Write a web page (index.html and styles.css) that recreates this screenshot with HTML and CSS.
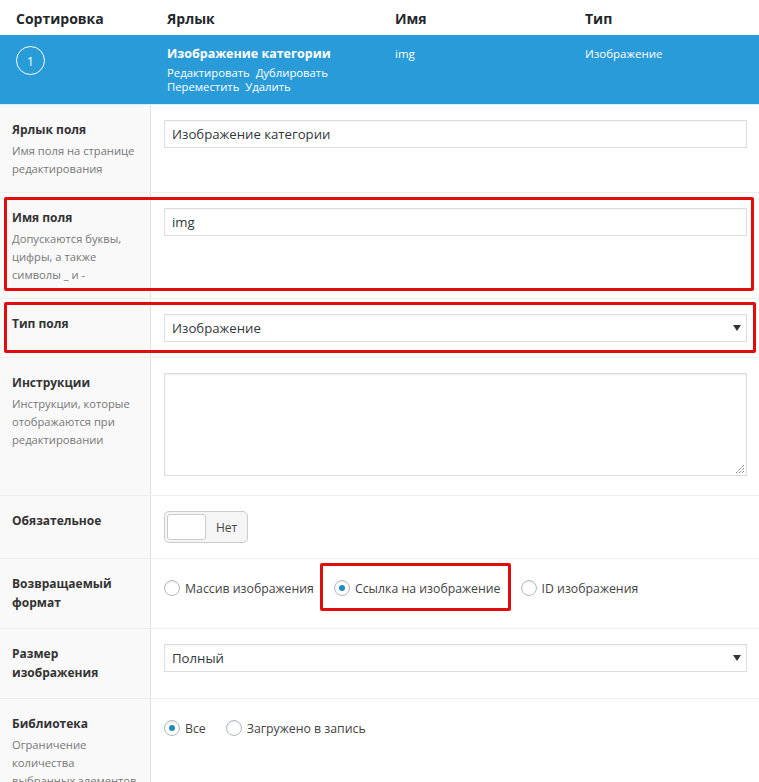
FILE: index.html
```html
<!DOCTYPE html>
<html lang="ru">
<head>
<meta charset="utf-8">
<link rel="stylesheet" href="styles.css">
</head>
<body>
<div class="page">
  <div class="thead">
    <div class="th th-order">Сортировка</div>
    <div class="th">Ярлык</div>
    <div class="th">Имя</div>
    <div class="th">Тип</div>
  </div>
  <div class="fieldrow">
    <div class="order"><span class="num">1</span></div>
    <div class="fcell">
      <div class="ftitle">Изображение категории</div>
      <div class="flinks">
        <div><span>Редактировать</span> <span>Дублировать</span></div>
        <div><span>Переместить</span> <span>Удалить</span></div>
      </div>
    </div>
    <div class="fcell ftext">img</div>
    <div class="fcell ftext">Изображение</div>
  </div>

  <div class="settings">
    <div class="row row-label">
      <div class="lbl"><b>Ярлык поля</b><p>Имя поля на странице редактирования</p></div>
      <div class="inp"><div class="input">Изображение категории</div></div>
    </div>
    <div class="row row-name">
      <div class="lbl"><b>Имя поля</b><p>Допускаются буквы, цифры, а также символы _ и -</p></div>
      <div class="inp"><div class="input">img</div></div>
      <div class="mark mark-name"></div>
    </div>
    <div class="row row-type">
      <div class="lbl"><b>Тип поля</b></div>
      <div class="inp"><div class="input select">Изображение<span class="arrow"></span></div></div>
      <div class="mark mark-type"></div>
    </div>
    <div class="row row-instr">
      <div class="lbl"><b>Инструкции</b><p>Инструкции, которые отображаются при редактировании</p></div>
      <div class="inp"><div class="textarea">
        <svg class="grip" width="10" height="10" viewBox="0 0 10 10"><path d="M9 1 L1 9 M9 4 L4 9 M9 7 L7 9" stroke="#555" stroke-width="1" stroke-dasharray="1 1" fill="none"/></svg>
      </div></div>
    </div>
    <div class="row row-req">
      <div class="lbl"><b>Обязательное</b></div>
      <div class="inp"><div class="toggle"><span class="knob"></span><span class="tlabel">Нет</span></div></div>
    </div>
    <div class="row row-ret">
      <div class="lbl"><b>Возвращаемый формат</b></div>
      <div class="inp radios">
        <label class="radio"><span class="dot"></span>Массив изображения</label>
        <label class="radio on"><span class="dot"></span>Ссылка на изображение</label>
        <label class="radio"><span class="dot"></span>ID изображения</label>
      </div>
      <div class="mark mark-url"></div>
    </div>
    <div class="row row-size">
      <div class="lbl"><b>Размер изображения</b></div>
      <div class="inp"><div class="input select">Полный<span class="arrow"></span></div></div>
    </div>
    <div class="row row-lib">
      <div class="lbl"><b>Библиотека</b><p>Ограничение количества выбранных элементов</p></div>
      <div class="inp radios">
        <label class="radio on"><span class="dot"></span>Все</label>
        <label class="radio"><span class="dot"></span>Загружено в запись</label>
      </div>
    </div>
  </div>
</div>
</body>
</html>
```

FILE: styles.css
```css
* { box-sizing: border-box; }
html, body { margin: 0; padding: 0; background: #fff; }
body {
  font-family: "Open Sans", "Noto Sans", sans-serif;
  color: #23282d;
  width: 759px;
  height: 782px;
  overflow: hidden;
}
.page { position: relative; }

.thead {
  display: grid;
  grid-template-columns: 167px 228px 190px 1fr;
  height: 35px;
  align-items: center;
  background: #fff;
}
.th { font-weight: 700; font-size: 14px; color: #23282d; padding-top: 1px; }
.th-order { padding-left: 16px; }

.fieldrow {
  display: grid;
  grid-template-columns: 167px 228px 190px 1fr;
  height: 70px;
  background: #2a9bd9;
  color: #fff;
  border-bottom: 1px solid #d4f0ff;
}
.order { padding: 11px 0 0 16px; }
.num {
  display: flex;
  width: 29px;
  height: 29px;
  border: 1px solid #fff;
  border-radius: 50%;
  align-items: center;
  justify-content: center;
  font-size: 12px;
  padding-top: 1px;
}
.fcell { padding-top: 10px; }
.ftitle { font-weight: 700; font-size: 12.5px; line-height: 17px; }
.flinks { font-size: 11.3px; line-height: 14px; margin-top: 4px; }
.flinks span:first-child { margin-right: 3px; }
.ftext { font-size: 11.5px; line-height: 17px; }

.settings { position: relative; }
.row {
  position: relative;
  display: grid;
  grid-template-columns: 151px 1fr;
  border-top: 1px solid #eeeeee;
}
.row:first-child { border-top: 0; }
.lbl {
  background: #f9f9f9;
  border-right: 1px solid #e1e1e1;
  padding: 15px 4px 0 12px;
}
.lbl b { display: block; font-size: 12px; font-weight: 700; line-height: 19px; color: #333; }
.lbl p { margin: 3px 0 0; font-size: 11.2px; line-height: 18px; color: #777; }
.row-lib .lbl { padding-right: 12px; }
.inp { padding: 15px 12px 0 13px; }

.input {
  height: 28px;
  border: 1px solid #dddddd;
  background: #fff;
  font-size: 13.2px;
  line-height: 26px;
  padding: 0 7px;
  color: #32373c;
  box-shadow: inset 0 1px 2px rgba(0,0,0,0.04);
  position: relative;
}
.arrow {
  position: absolute;
  right: 5px;
  top: 10px;
  width: 0; height: 0;
  border-left: 4px solid transparent;
  border-right: 4px solid transparent;
  border-top: 6px solid #333;
}

.row-label { height: 87px; }
.row-name { height: 106px; }
.row-type { height: 59px; }
.row-instr { height: 138px; }
.row-req { height: 63px; }
.row-ret { height: 70px; }
.row-size { height: 70px; }
.row-lib { height: 90px; }

.textarea {
  position: relative;
  height: 103px;
  border: 1px solid #dddddd;
  box-shadow: inset 0 1px 2px rgba(0,0,0,0.07);
}
.grip { position: absolute; right: 1px; bottom: 1px; }

.toggle {
  display: flex;
  align-items: center;
  width: 84px;
  height: 32px;
  background: #f5f5f5;
  border: 1px solid #cccccc;
  border-radius: 5px;
  padding: 2px;
}
.knob {
  width: 39px;
  height: 26px;
  background: #fff;
  border: 1px solid #cccccc;
  border-radius: 3px;
}
.tlabel { font-size: 12px; margin-left: 10px; color: #444; }

.radios { display: flex; align-items: flex-start; padding-top: 19px; }
.radio {
  display: flex;
  align-items: center;
  font-size: 12.3px;
  color: #444;
  height: 20px;
  margin-right: 20px;
}
.dot {
  width: 16px;
  height: 16px;
  border: 1px solid #b4b9be;
  border-radius: 50%;
  margin-right: 5px;
  position: relative;
  background: #fff;
  box-shadow: inset 0 1px 2px rgba(0,0,0,0.1);
}
.on .dot::after {
  content: "";
  position: absolute;
  left: 4px; top: 4px;
  width: 6px; height: 6px;
  border-radius: 50%;
  background: #1e8cbe;
}

.mark {
  position: absolute;
  border: 3px solid #e00d0d;
  pointer-events: none;
}
.mark-name { left: 4px; top: 4px; width: 750px; height: 94px; border-radius: 2px; }
.mark-type { left: 4px; top: 3px; width: 752px; height: 51px; border-radius: 2px; }
.mark-url { left: 320px; top: 4px; width: 191px; height: 48px; border-radius: 2px; }
```
